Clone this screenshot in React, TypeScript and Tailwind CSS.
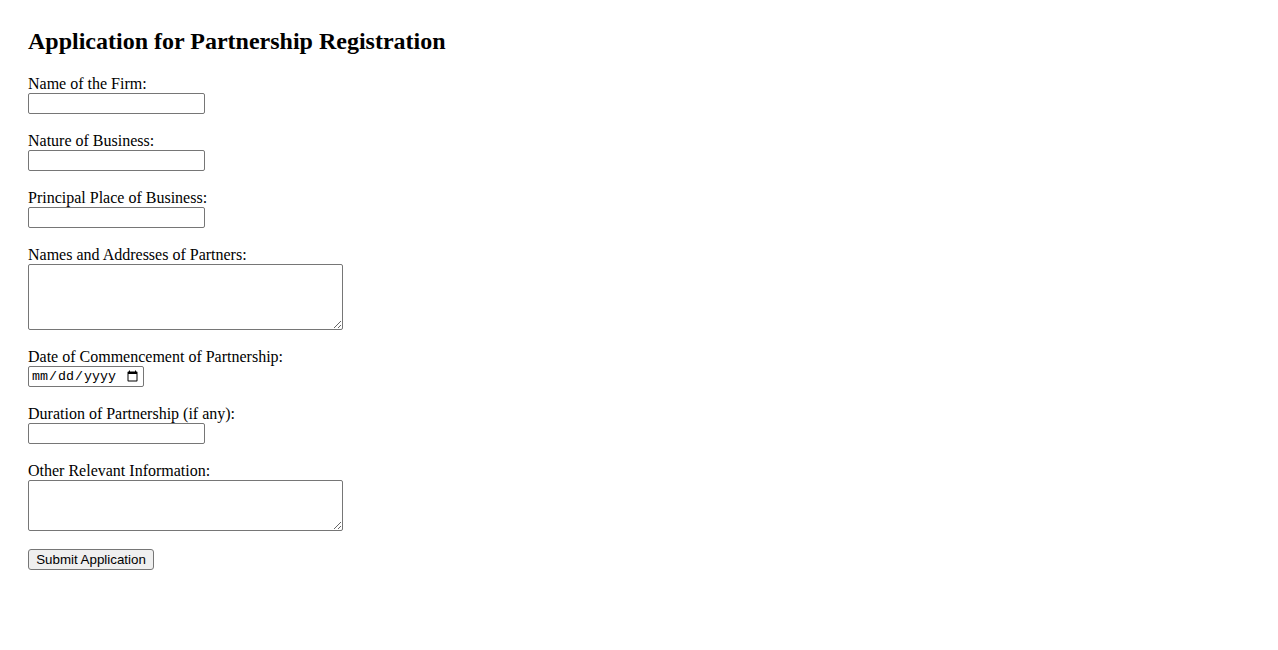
import React from 'react';

const Field = ({ label, children }: { label: string; children: React.ReactNode }) => (
  <div className="flex flex-col items-start">
    <label className="block h-[18px] leading-[18px] text-[16px]">{label}</label>
    {children}
  </div>
);

const inputCls =
  "block box-border h-[21px] w-[177px] border border-[#767676] rounded-[2px] bg-white px-[2px] py-px text-[13.33px] font-['Liberation_Sans',sans-serif]";
const areaCls =
  "block box-border w-[315px] border border-[#767676] rounded-[2px] bg-white px-[2px] py-[2px] text-[13.33px] font-['Liberation_Mono',monospace]";

export default function App() {
  return (
    <div className="min-h-screen bg-white text-black font-['Liberation_Serif',serif] pl-[28px] pt-[27px]">
      <h2 className="h-[28px] leading-[28px] text-[24px] font-bold mb-[20px]">
        Application for Partnership Registration
      </h2>
      <form className="flex flex-col items-start gap-[18px]" onSubmit={(e) => e.preventDefault()}>
        <Field label="Name of the Firm:">
          <input type="text" className={inputCls} />
        </Field>
        <Field label="Nature of Business:">
          <input type="text" className={inputCls} />
        </Field>
        <Field label="Principal Place of Business:">
          <input type="text" className={inputCls} />
        </Field>
        <Field label="Names and Addresses of Partners:">
          <textarea className={areaCls + " h-[66px]"} />
        </Field>
        <Field label="Date of Commencement of Partnership:">
          <input
            type="date"
            className="block box-border h-[21px] w-[116px] border border-[#767676] rounded-[2px] bg-white px-[2px] text-[13.33px] font-['Liberation_Mono',monospace]"
          />
        </Field>
        <Field label="Duration of Partnership (if any):">
          <input type="text" className={inputCls} />
        </Field>
        <Field label="Other Relevant Information:">
          <textarea className={areaCls + " h-[51px]"} />
        </Field>
        <button
          type="submit"
          className="box-border h-[21px] w-[126px] border border-[#767676] rounded-[3px] bg-[#efefef] px-[6px] text-[13.33px] leading-[19px] text-black font-['Liberation_Sans',sans-serif]"
        >
          Submit Application
        </button>
      </form>
    </div>
  );
}
